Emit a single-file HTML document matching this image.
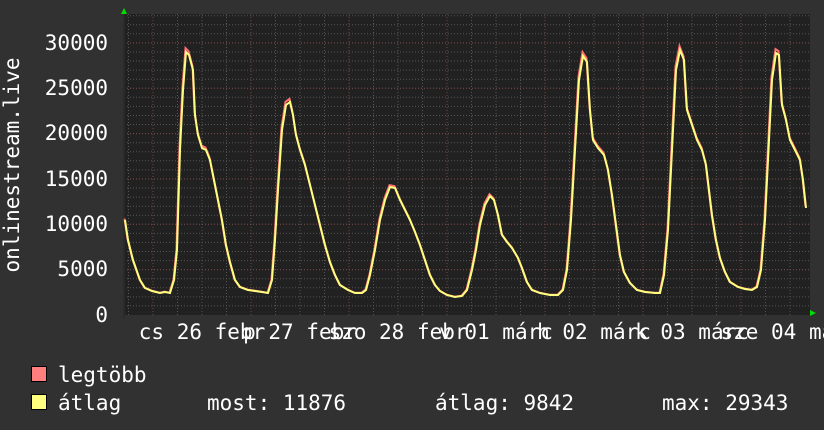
<!DOCTYPE html>
<html><head><meta charset="utf-8"><style>
html,body{margin:0;padding:0;background:#313131;}
svg{display:block}
text{font-family:"DejaVu Sans Mono","Liberation Mono",monospace;fill:#fff;font-size:21px}
</style></head><body>
<svg id="g" width="824" height="430" viewBox="0 0 824 430" xmlns="http://www.w3.org/2000/svg">
<rect width="824" height="430" fill="#313131"/>
<rect x="124" y="14" width="686" height="301" fill="#212121"/>
<g id="grid"></g>
<polygon points="121,14 127,14 124,8" fill="#00dd00"/>
<polygon points="810,310 810,316 816,313" fill="#00dd00"/>
<polyline id="red" fill="none" stroke="#ff7070" stroke-width="2"/>
<polyline id="yel" fill="none" stroke="#ffff7f" stroke-width="2"/>
<g text-anchor="end">
<text x="108" y="50">30000</text>
<text x="108" y="95">25000</text>
<text x="108" y="140">20000</text>
<text x="108" y="186">15000</text>
<text x="108" y="231">10000</text>
<text x="108" y="276">5000</text>
<text x="108" y="322">0</text>
</g>
<text transform="translate(19,165) rotate(-90)" text-anchor="middle">onlinestream.live</text>
<g text-anchor="middle">
<text x="202" y="339">cs 26 febr</text>
<text x="300" y="339">p 27 febr</text>
<text x="398" y="339">szo 28 febr</text>
<text x="496" y="339">v 01 márc</text>
<text x="594" y="339">h 02 márc</text>
<text x="692" y="339">k 03 márc</text>
<text x="790" y="339">sze 04 márc</text>
</g>
<rect x="31.5" y="366.5" width="15" height="15" fill="#ff7f7f" stroke="#000"/>
<rect x="31.5" y="394.5" width="15" height="15" fill="#ffff7f" stroke="#000"/>
<text x="58" y="382">legtöbb</text>
<text x="58" y="410">átlag</text>
<text x="207" y="410">most: 11876</text>
<text x="435" y="410">átlag: 9842</text>
<text x="662" y="410">max: 29343</text>
</svg>
<script>
var g=document.getElementById('grid'),s='';
for(var y=315-9.07;y>14;y-=9.07){s+='<line x1="124" x2="810" y1="'+y.toFixed(1)+'" y2="'+y.toFixed(1)+'" stroke="#555" stroke-dasharray="1,2"/>';}
for(var k=1;k<=6;k++){var y=315-k*45.35;s+='<line x1="124" x2="810" y1="'+y.toFixed(1)+'" y2="'+y.toFixed(1)+'" stroke="#7a4545" stroke-dasharray="1,2"/>';}
for(var x=128.5;x<810;x+=24.5){s+='<line y1="14" y2="315" x1="'+x.toFixed(1)+'" x2="'+x.toFixed(1)+'" stroke="#555" stroke-dasharray="1,2"/>';}
for(var x=153;x<810;x+=98){s+='<line y1="14" y2="315" x1="'+x+'" x2="'+x+'" stroke="#7a4545" stroke-dasharray="1,2"/>';}
s+='<line x1="124" x2="124" y1="14" y2="318" stroke="#2a2a2a" stroke-width="2"/>';
g.innerHTML=s;
var p=[[125,220],[128,240],[133,260],[140,280],[145,288],[152,291],[160,293],[165,292],[170,293],[174,280],[177,250],[180,150],[183,90],[186,52],[189,55],[193,70],[195,115],[198,135],[202,148],[206,150],[210,160],[214,180],[218,200],[222,220],[226,245],[230,262],[235,280],[240,287],[248,290],[255,291],[262,292],[268,293],[272,280],[275,240],[278,190],[282,130],[286,105],[290,102],[293,115],[296,135],[300,150],[305,165],[310,185],[315,205],[320,225],[325,245],[330,262],[335,275],[340,285],[348,290],[355,293],[362,293],[366,290],[370,275],[375,250],[380,220],[385,200],[390,187],[395,188],[400,200],[405,210],[410,220],[415,232],[420,245],[425,260],[430,275],[435,285],[440,291],[447,295],[455,297],[462,296],[467,290],[472,270],[476,250],[480,225],[485,205],[490,196],[494,200],[498,215],[502,235],[507,242],[512,248],[518,258],[522,268],[527,282],[532,290],[540,293],[550,295],[558,295],[563,290],[567,270],[571,220],[575,150],[579,80],[583,56],[587,62],[590,110],[593,140],[598,148],[604,155],[608,170],[612,195],[616,225],[620,255],[624,272],[630,283],[637,290],[645,292],[655,293],[660,293],[664,275],[668,230],[672,150],[676,70],[680,50],[684,60],[687,110],[692,125],[697,140],[702,150],[706,165],[709,190],[712,215],[716,240],[720,258],[725,272],[730,282],[738,287],[745,289],[752,290],[757,287],[761,270],[765,220],[768,160],[772,80],[776,53],[779,55],[782,105],[786,120],[790,140],[795,150],[800,160],[803,180],[806,208]];
document.getElementById('yel').setAttribute('points',p.map(function(a){return a[0]+','+a[1]}).join(' '));
document.getElementById('red').setAttribute('points',p.map(function(a){return (a[0]-0.5)+','+(a[1]-(315-a[1])*0.015).toFixed(1)}).join(' '));
</script>
</body></html>
